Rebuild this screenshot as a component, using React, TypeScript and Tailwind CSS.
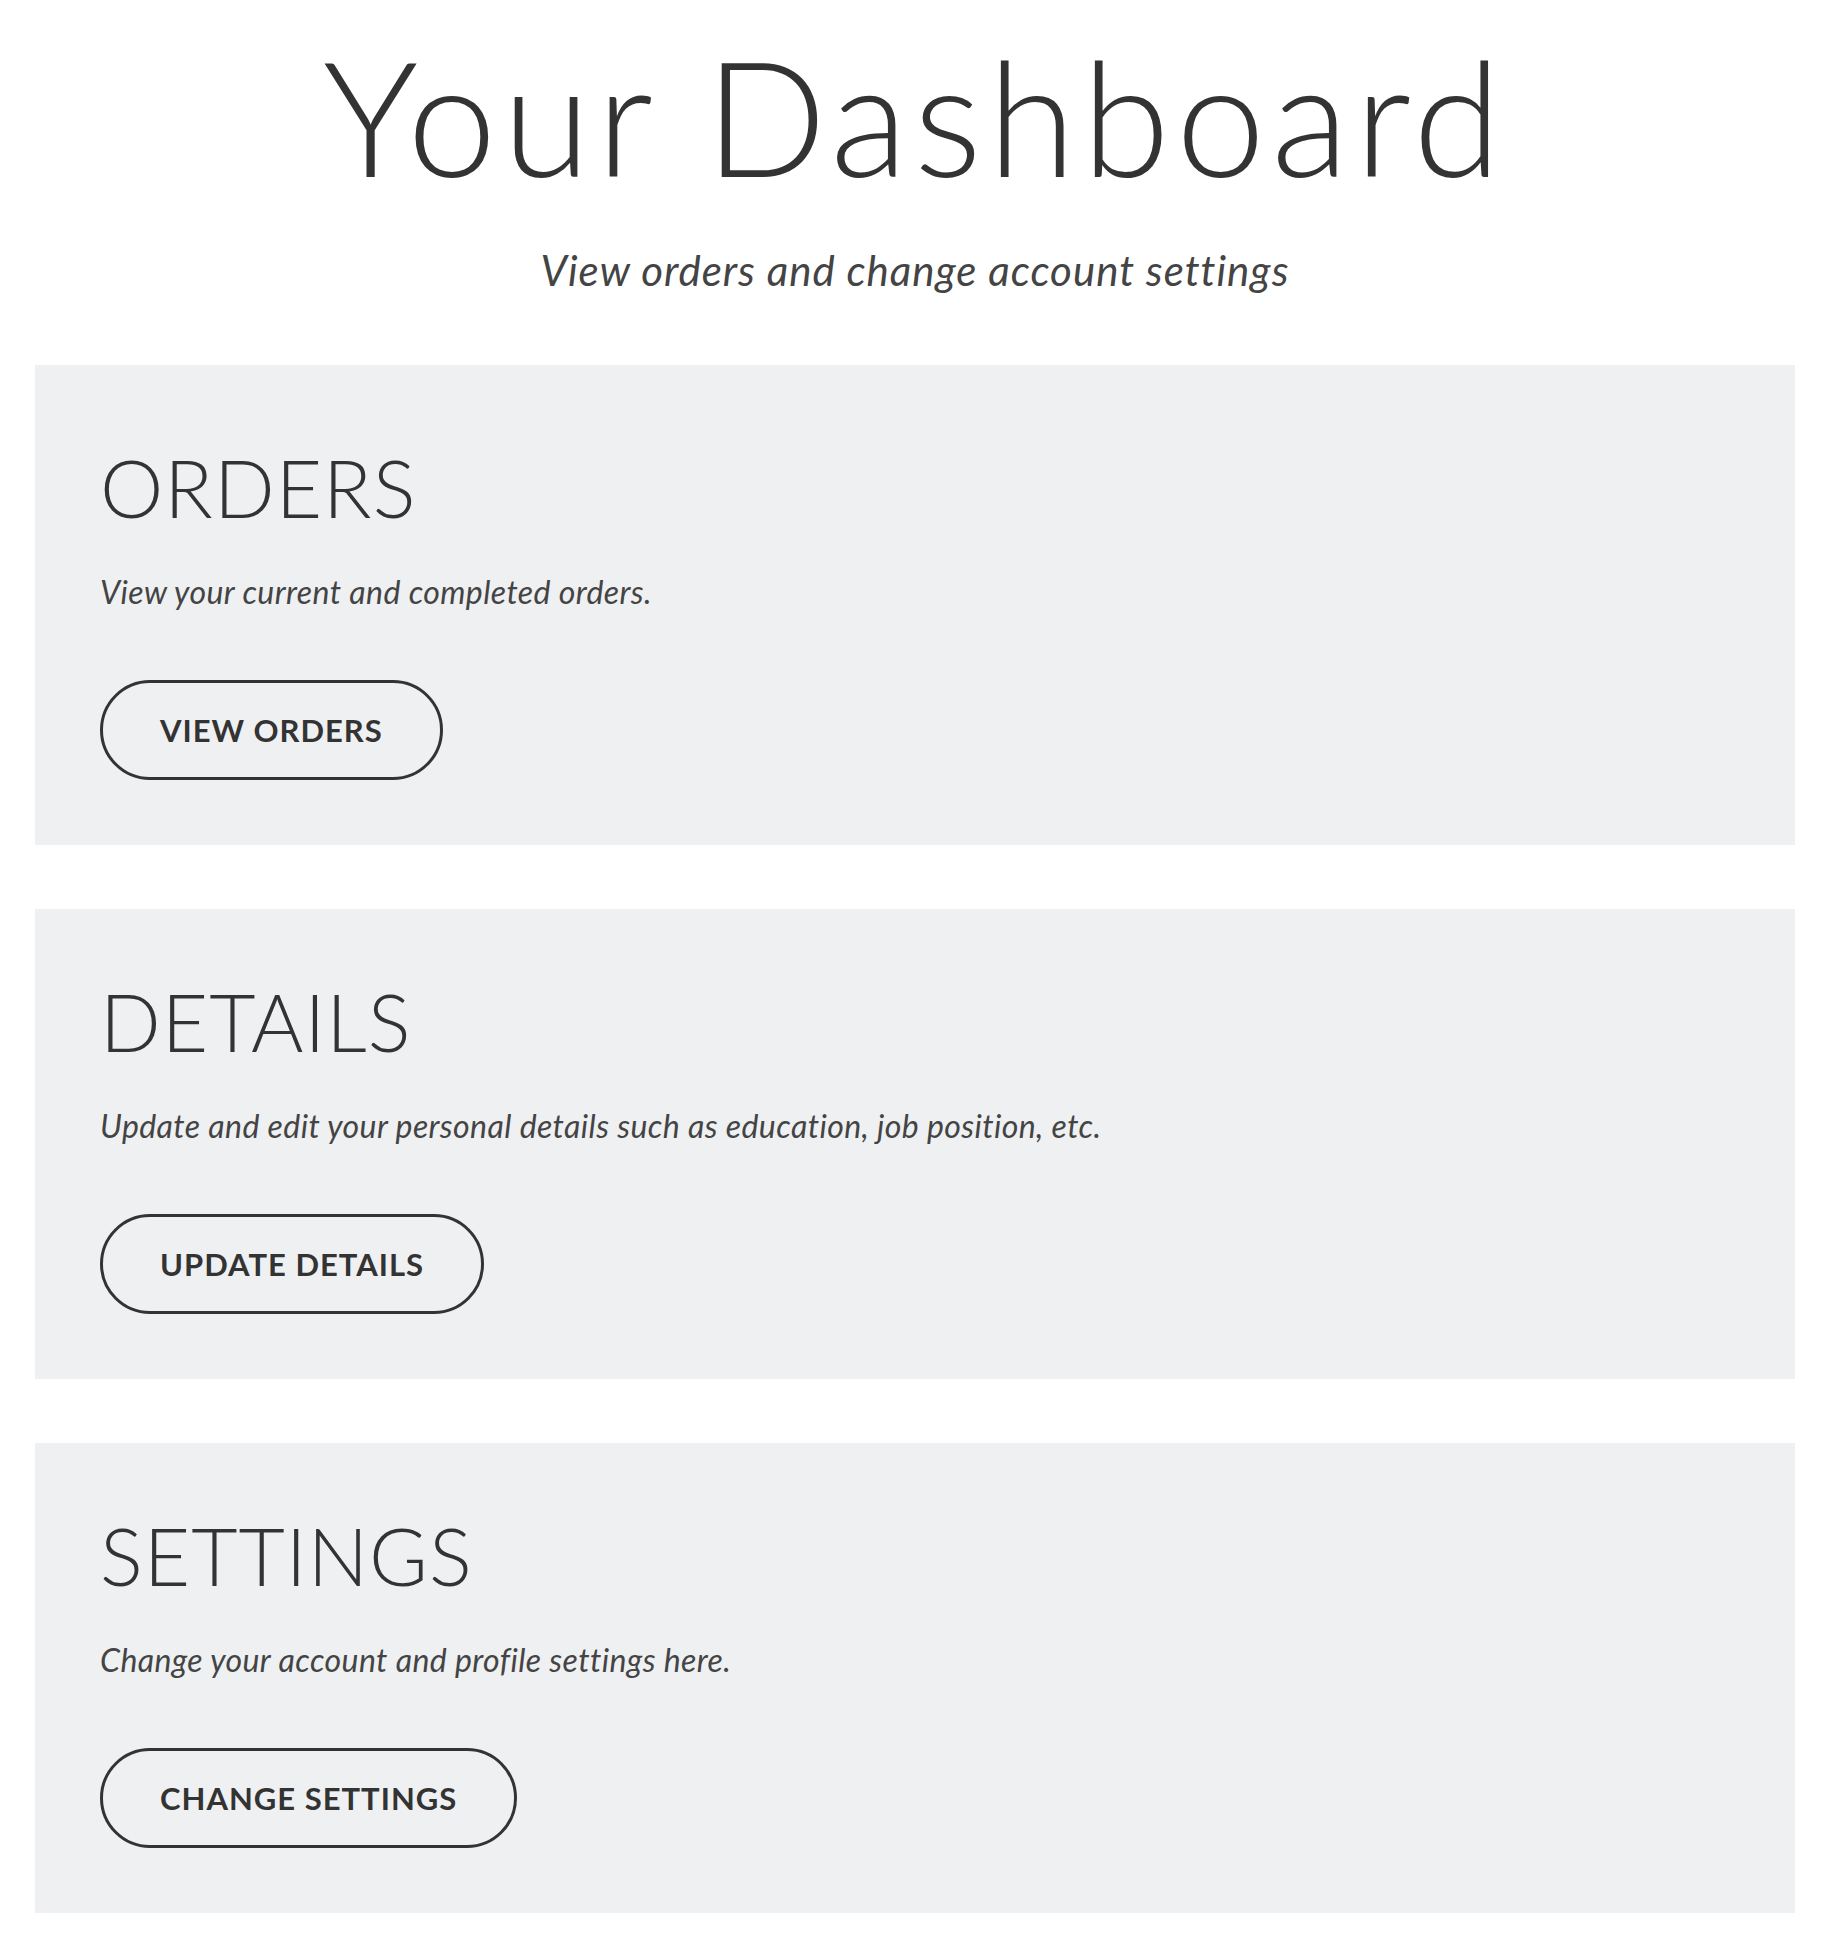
import React from 'react';

interface Section {
  title: string;
  text: string;
  action: string;
}

const sections: Section[] = [
  { title: 'ORDERS', text: 'View your current and completed orders.', action: 'VIEW ORDERS' },
  {
    title: 'DETAILS',
    text: 'Update and edit your personal details such as education, job position, etc.',
    action: 'UPDATE DETAILS',
  },
  { title: 'SETTINGS', text: 'Change your account and profile settings here.', action: 'CHANGE SETTINGS' },
];

const App: React.FC = () => {
  return (
    <div className="min-h-screen bg-white pb-[38px] pl-[35px] pr-[38px] font-['Lato',sans-serif] text-[#333333]">
      {/* Page header */}
      <header className="flex flex-col items-center pt-[35px]">
        <h1 className="text-[160px] font-light leading-[160px] tracking-[6px]">Your Dashboard</h1>
        <p className="mt-[54px] text-[42px] italic leading-[42px] tracking-[1px] text-[#444444]">
          View orders and change account settings
        </p>
      </header>

      <div className="mt-[74px] flex flex-col gap-[64px]">
        {sections.map((section, index) => (
          <section
            key={section.title}
            className={`flex flex-col items-start bg-[#eff0f2] pb-[65px] pl-[65px] ${index === 0 ? 'pt-[82px]' : 'pt-[72px]'}`}
          >
            <h2 className="text-[80px] font-light leading-[80px] tracking-[1px]">{section.title}</h2>
            <p className="mt-[49px] text-[32px] italic leading-[32px] tracking-[0.4px] text-[#444444]">
              {section.text}
            </p>
            <button className="mt-[72px] flex h-[100px] items-center rounded-full border-[3px] border-[#333333] px-[57px] text-[31px] font-bold tracking-[1px]">
              {section.action}
            </button>
          </section>
        ))}
      </div>
    </div>
  );
};

export default App;
